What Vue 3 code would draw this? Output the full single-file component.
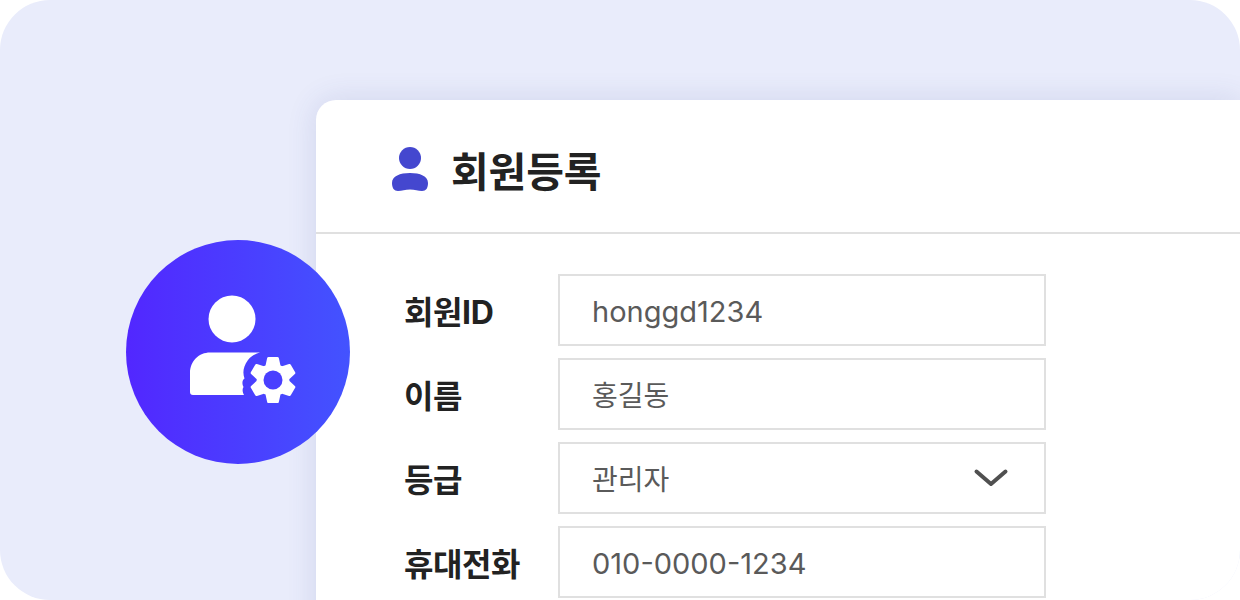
<script setup>
import { computed } from "vue"

const fields = [
  { label: "회원ID", value: "honggd1234", latin: true },
  { label: "이름", value: "홍길동" },
  { label: "등급", value: "관리자", select: true },
  { label: "휴대전화", value: "010-0000-1234", latin: true },
]

// six toothed gear, drawn around 0,0 and moved into place
const gear = computed(() => {
  const pts = []
  for (let k = 0; k < 6; k++) {
    const a = (k * Math.PI) / 3 - Math.PI / 2
    for (const [r, d] of [[15, -0.42], [22, -0.2], [22, 0.2], [15, 0.42]]) {
      pts.push(`${(r * Math.cos(a + d)).toFixed(2)} ${(r * Math.sin(a + d)).toFixed(2)}`)
    }
  }
  return `M${pts.join("L")}Z`
})
</script>

<template>
  <div class="stage">
    <div class="card">
      <header class="card-head">
        <svg class="head-icon" width="36" height="44" viewBox="0 0 36 44">
          <circle cx="18" cy="11" r="11" fill="#4447cf" />
          <path d="M0 36C0 29 8 26 18 26S36 29 36 36C36 41 34 44 30 44C26 44 23 42.500 18 42.500S10 44 6 44C2 44 0 41 0 36Z" fill="#4447cf" />
        </svg>
        <h1>회원등록</h1>
      </header>
      <div class="form">
        <div v-for="f in fields" :key="f.label" class="row">
          <label>{{ f.label }}</label>
          <div class="field">
            <span :class="{ latin: f.latin }">{{ f.value }}</span>
            <svg v-if="f.select" width="36" height="20" viewBox="0 0 36 20">
              <path d="M3.500 3.500L18 16L32.500 3.500" fill="none" stroke="#505050" stroke-width="4" stroke-linecap="round" stroke-linejoin="round" />
            </svg>
          </div>
        </div>
      </div>
    </div>
    <div class="badge">
      <svg width="224" height="224" viewBox="0 0 224 224">
        <circle cx="106" cy="79" r="23.500" fill="#fff" />
        <path d="M134 112.500H84C73 112.500 64 121 64 133V152C64 154 65 155 67 155H118C116.500 152 116 149 117.500 147C115.500 143 116.500 140 118.500 138.500C116.500 133 117 127 122 120C125 116 129 114 134 112.500Z" fill="#fff" />
        <g transform="translate(147 140)">
          <path :d="gear" fill="#fff" stroke="#fff" stroke-width="3" stroke-linejoin="round" />
          <circle r="9.500" fill="#4a3fff" />
        </g>
      </svg>
    </div>
  </div>
</template>

<style>
body {
  background: #fff;
}
</style>

<style scoped>
.stage {
  position: relative;
  width: 1240px;
  height: 600px;
  box-sizing: border-box;
  padding: 100px 0 0 316px;
  overflow: hidden;
  border-radius: 50px;
  background: #e9ecfb;
  font-family: Inter, "Noto Sans CJK KR", sans-serif;
}

.card {
  height: 540px;
  border-radius: 20px 0 0 0;
  background: #fff;
  box-shadow: 0 0 30px rgba(60, 70, 150, 0.14);
}

.card-head {
  display: flex;
  align-items: center;
  gap: 23px;
  height: 134px;
  box-sizing: border-box;
  padding: 6px 0 0 76px;
  border-bottom: 2px solid #e0e0e0;
}

.head-icon {
  width: 36px;
  height: 44px;
}

h1 {
  margin: 0;
  font-size: 41px;
  font-weight: 700;
  letter-spacing: -0.1px;
  color: #222;
}

.form {
  display: flex;
  flex-direction: column;
  gap: 12px;
  padding: 40px 0 0 88px;
}

.row {
  display: flex;
  align-items: center;
}

label {
  width: 154px;
  font-size: 32px;
  font-weight: 700;
  letter-spacing: -0.4px;
  color: #222;
}

.field {
  display: flex;
  align-items: center;
  justify-content: space-between;
  width: 488px;
  height: 72px;
  box-sizing: border-box;
  padding: 0 35px 0 32px;
  border: 2px solid #e0e0e0;
  font-size: 28px;
  color: #5a5a5a;
}

.latin {
  padding-top: 2px;
  font-size: 29px;
}

.badge {
  position: absolute;
  left: 126px;
  top: 240px;
  width: 224px;
  height: 224px;
  border-radius: 50%;
  background: linear-gradient(90deg, #5227ff, #4353ff);
}

.badge svg {
  display: block;
}
</style>
